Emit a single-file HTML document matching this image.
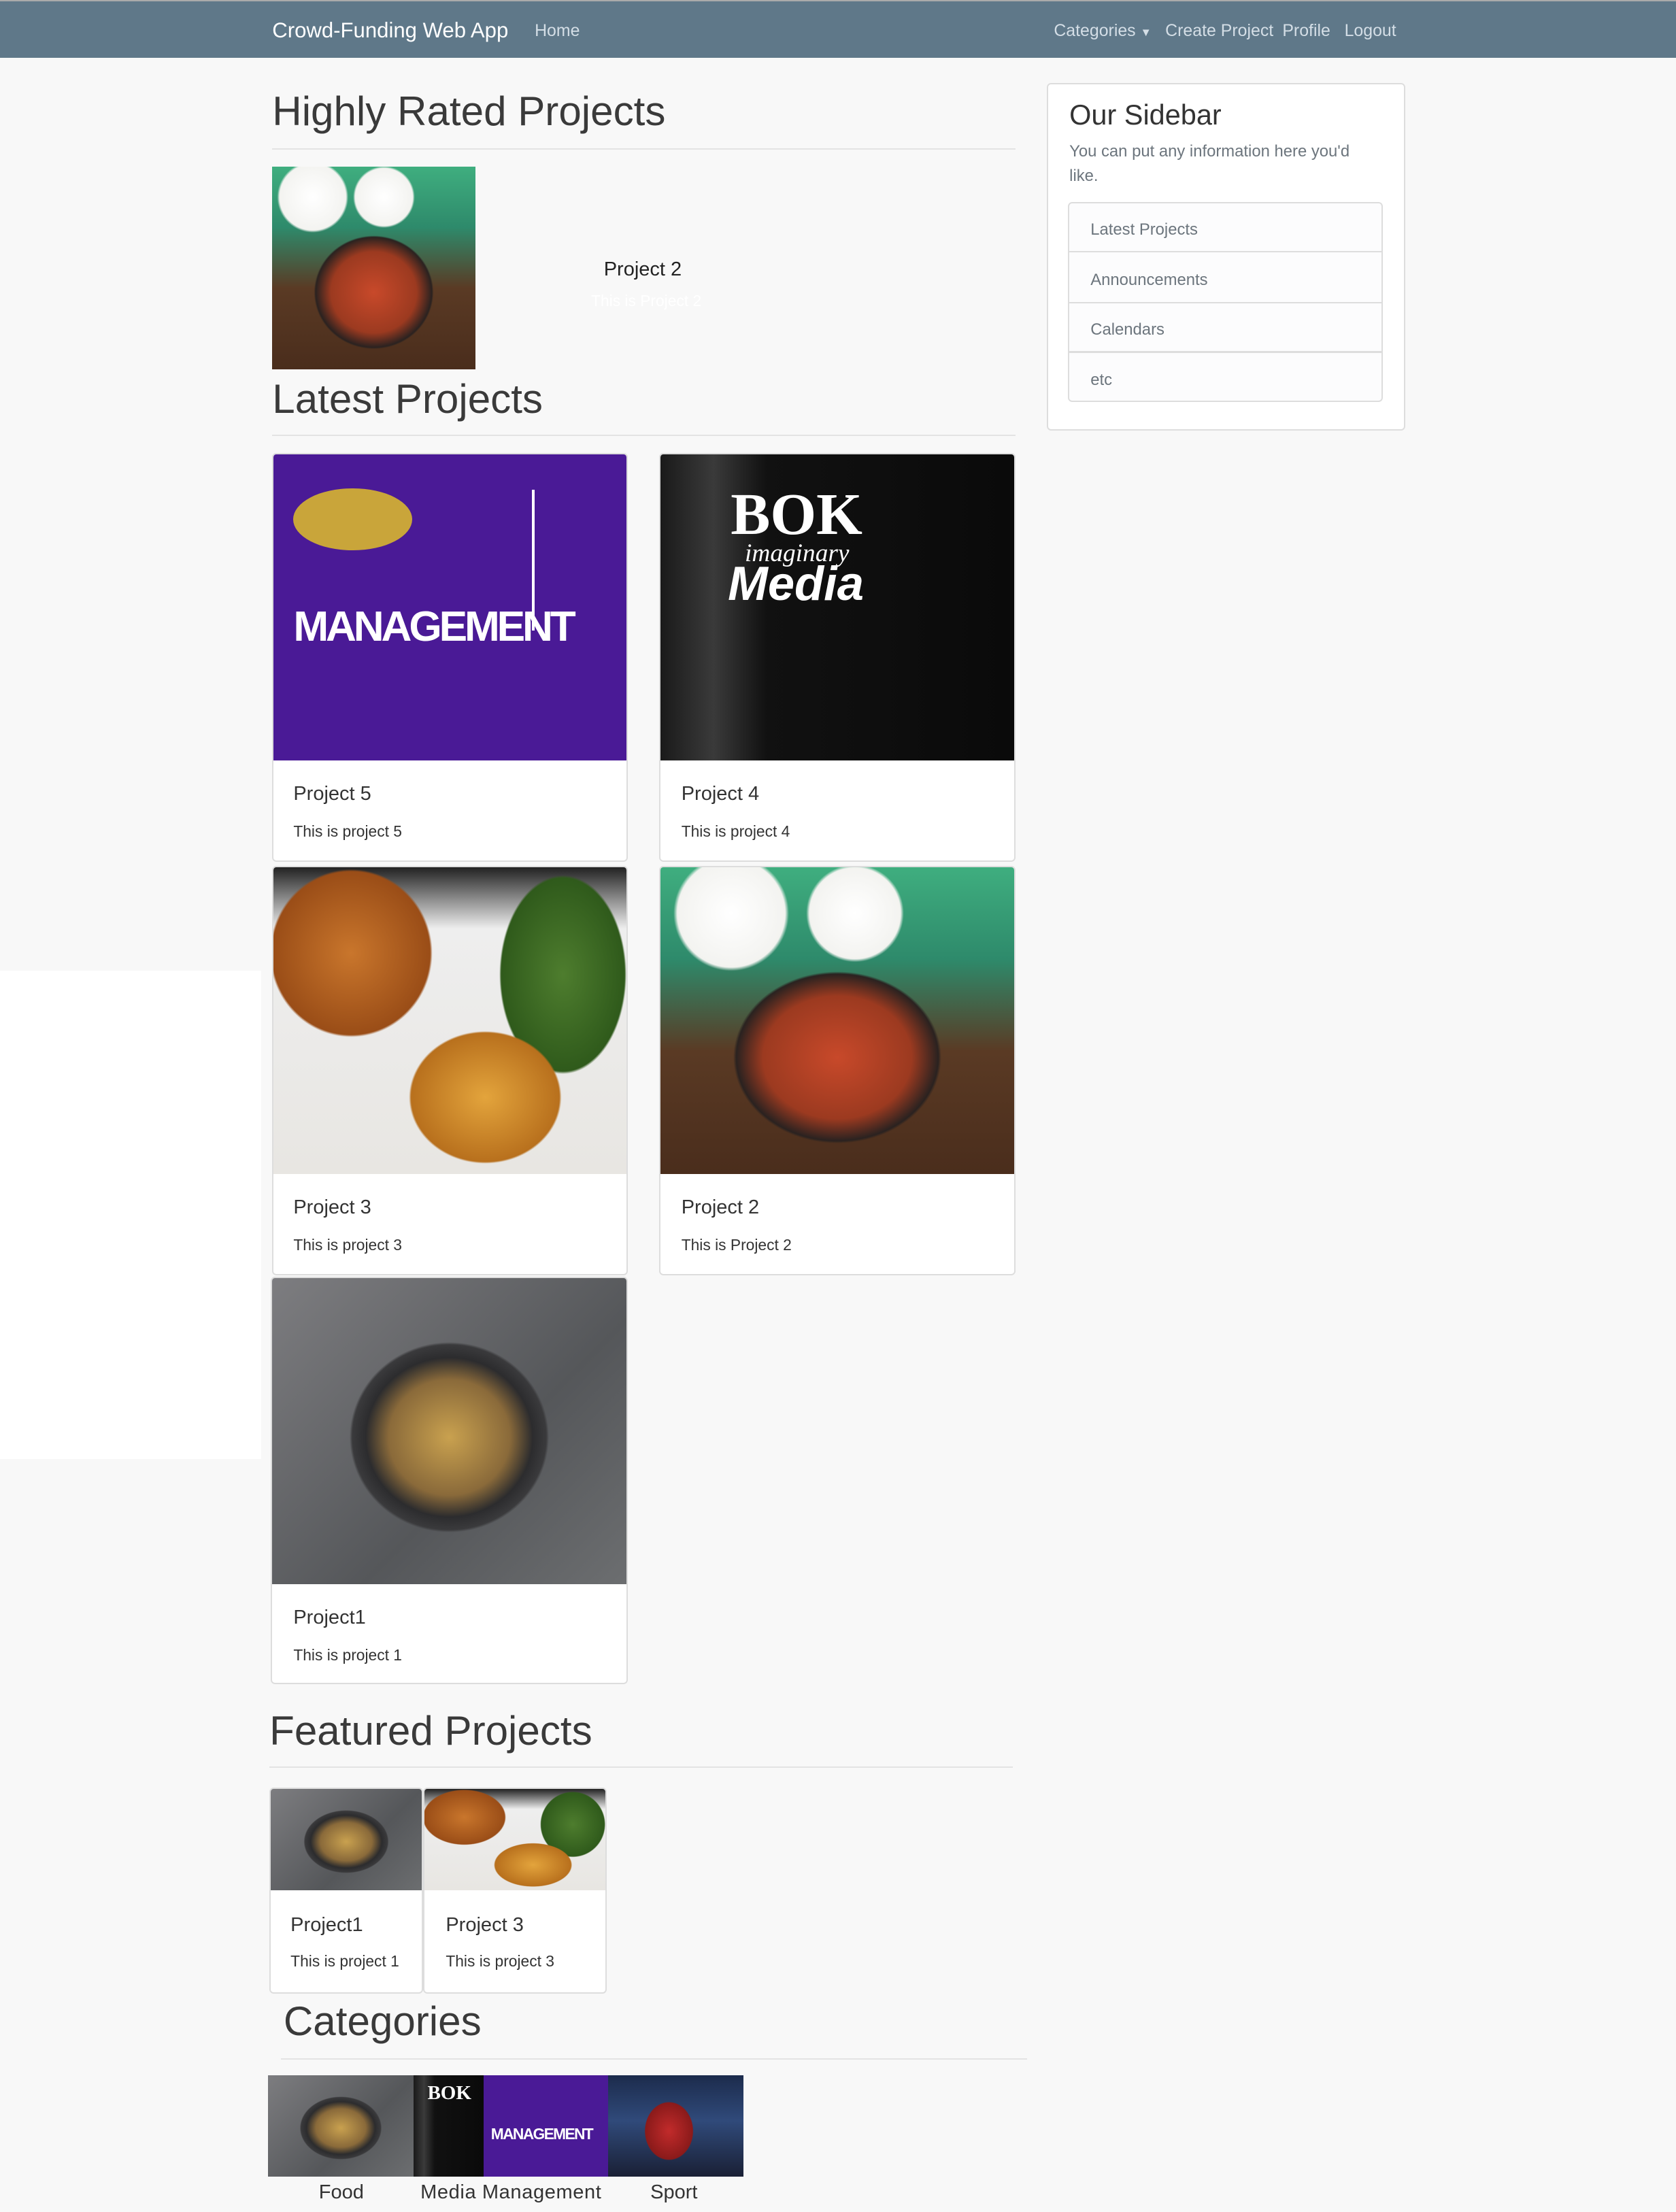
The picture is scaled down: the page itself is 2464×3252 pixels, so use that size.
<!DOCTYPE html>
<html><head><meta charset="utf-8">
<style>
html,body{margin:0;padding:0}
body{width:1188px;height:1568px;zoom:2.07407;background:#f8f8f8;font-family:"Liberation Sans",sans-serif;color:#333;position:relative;overflow:hidden}
.a{position:absolute}
.nav{left:0;top:0;width:1188px;height:41px;background:#5f7889;border-top:1px solid #aaa;box-sizing:border-box}
.nl{color:#d4dee6;font-size:12px;top:15px}
h1{margin:0;font-weight:normal;font-size:29px;color:#3a3a3a;letter-spacing:0px}
.hr{height:1px;background:#e3e3e3}
.card{background:#fff;border:1px solid #ddd;border-radius:3px;box-sizing:border-box;overflow:hidden}
.card .im{position:absolute;left:0;top:0;width:100%}
.ct{position:absolute;font-size:14px;color:#333}
.cx{position:absolute;font-size:11px;color:#333}
.pasta{background:radial-gradient(ellipse 38% 42% at 50% 52%,#c9a14f 0,#8a6a3a 45%,#2c2c2e 62%,#3a3a3c 72%,transparent 74%),linear-gradient(135deg,#7d7d80,#55575a 60%,#6c6e70)}
.burger{background:radial-gradient(ellipse 32% 38% at 22% 28%,#c9762c,#9a4d17 70%,transparent 72%),radial-gradient(ellipse 30% 30% at 60% 75%,#e3a43c,#b8701d 70%,transparent 72%),radial-gradient(ellipse 25% 45% at 82% 35%,#4e7d2e,#2f5a1b 70%,transparent 72%),linear-gradient(#222,#eee 20%,#e8e6e2)}
.tteok{background:radial-gradient(ellipse 42% 40% at 50% 62%,#c8492a,#9c3a20 50%,#2a2220 68%,transparent 70%),radial-gradient(circle at 20% 15%,#fff 0,#f3f3f0 14%,transparent 15%),radial-gradient(circle at 55% 15%,#fff 0,#f3f3f0 14%,transparent 15%),linear-gradient(#3fae7f,#2e8a6b 30%,#5a3a24 60%,#4a2d1c)}
.mgmt{background:#4a1a96}
.media{background:linear-gradient(90deg,#1a1a1a,#3a3a3a 15%,#111 30%,#0a0a0a)}
.sport{background:radial-gradient(ellipse 25% 40% at 45% 55%,#c22b2b,#8a1a1a 70%,transparent 72%),linear-gradient(#1c2b4c,#304a7a 45%,#1a2035)}
</style></head><body>
<div class="a nav"></div>
<div class="a" style="left:193px;top:13px;font-size:15px;color:#fff">Crowd-Funding Web App</div>
<div class="a nl" style="left:379px">Home</div>
<div class="a nl" style="left:747px">Categories <span style="font-size:8px">▼</span></div>
<div class="a nl" style="left:826px">Create Project</div>
<div class="a nl" style="left:909px">Profile</div>
<div class="a nl" style="left:953px">Logout</div>

<div class="a" style="left:0;top:688px;width:185px;height:346px;background:#fff"></div>

<h1 class="a" style="left:193px;top:62px">Highly Rated Projects</h1>
<div class="a hr" style="left:193px;top:105px;width:527px"></div>
<div class="a tteok" style="left:193px;top:118px;width:144px;height:144px"></div>
<div class="a" style="left:428px;top:183px;font-size:14px;color:#222">Project 2</div>
<div class="a" style="left:419px;top:207px;font-size:11px;color:#fff">This is Project 2</div>

<h1 class="a" style="left:193px;top:266px">Latest Projects</h1>
<div class="a hr" style="left:193px;top:308px;width:527px"></div>

<div class="a card" style="left:193px;top:321px;width:252px;height:290px"><div class="im mgmt" style="height:217px"></div>
<div class="a" style="left:14px;top:105px;color:#fff;font-size:30px;font-weight:bold;letter-spacing:-2px">MANAGEMENT</div>
<div class="a" style="left:14px;top:24px;width:84px;height:44px;border-radius:50%;background:#c9a53a"></div>
<div class="a" style="left:183px;top:25px;width:2px;height:100px;background:#fff"></div>
<div class="ct" style="left:14px;top:233px">Project 5</div><div class="cx" style="left:14px;top:261px">This is project 5</div></div>

<div class="a card" style="left:467px;top:321px;width:253px;height:290px"><div class="im media" style="height:217px"></div>
<div class="a" style="left:50px;top:18px;color:#fff;font-size:42px;font-family:'Liberation Serif',serif;font-weight:bold">BOK</div>
<div class="a" style="left:60px;top:60px;color:#fff;font-size:18px;font-family:'Liberation Serif',serif;font-style:italic">imaginary</div>
<div class="a" style="left:48px;top:72px;color:#fff;font-size:34px;font-style:italic;font-weight:bold">Media</div>
<div class="ct" style="left:15px;top:233px">Project 4</div><div class="cx" style="left:15px;top:261px">This is project 4</div></div>

<div class="a card" style="left:193px;top:614px;width:252px;height:290px"><div class="im burger" style="height:217px"></div>
<div class="ct" style="left:14px;top:233px">Project 3</div><div class="cx" style="left:14px;top:261px">This is project 3</div></div>

<div class="a card" style="left:467px;top:614px;width:253px;height:290px"><div class="im tteok" style="height:217px"></div>
<div class="ct" style="left:15px;top:233px">Project 2</div><div class="cx" style="left:15px;top:261px">This is Project 2</div></div>

<div class="a card" style="left:192px;top:905px;width:253px;height:289px"><div class="im pasta" style="height:217px"></div>
<div class="ct" style="left:15px;top:233px">Project1</div><div class="cx" style="left:15px;top:261px">This is project 1</div></div>

<h1 class="a" style="left:191px;top:1210px">Featured Projects</h1>
<div class="a hr" style="left:191px;top:1252px;width:527px"></div>
<div class="a card" style="left:191px;top:1267px;width:109px;height:146px"><div class="im pasta" style="height:72px"></div>
<div class="ct" style="left:14px;top:89px">Project1</div><div class="cx" style="left:14px;top:116px">This is project 1</div></div>
<div class="a card" style="left:300px;top:1267px;width:130px;height:146px"><div class="im burger" style="height:72px"></div>
<div class="ct" style="left:15px;top:89px">Project 3</div><div class="cx" style="left:15px;top:116px">This is project 3</div></div>

<h1 class="a" style="left:201px;top:1416px">Categories</h1>
<div class="a hr" style="left:199px;top:1459px;width:529px"></div>
<div class="a pasta" style="left:190px;top:1471px;width:103px;height:72px"></div>
<div class="a media" style="left:293px;top:1471px;width:50px;height:72px"></div>
<div class="a" style="left:303px;top:1476px;color:#fff;font-size:14px;font-family:'Liberation Serif',serif;font-weight:bold">BOK</div>
<div class="a mgmt" style="left:343px;top:1471px;width:88px;height:72px"></div>
<div class="a" style="left:348px;top:1506px;color:#fff;font-size:11px;font-weight:bold;letter-spacing:-0.8px">MANAGEMENT</div>
<div class="a sport" style="left:431px;top:1471px;width:96px;height:72px"></div>
<div class="a" style="left:226px;top:1546px;font-size:14px;color:#333">Food</div>
<div class="a" style="left:298px;top:1546px;font-size:14px;color:#333;letter-spacing:0.3px">Media Management</div>
<div class="a" style="left:461px;top:1546px;font-size:14px;color:#333">Sport</div>

<div class="a card" style="left:742px;top:59px;width:254px;height:246px"></div>
<div class="a" style="left:758px;top:70px;font-size:20px;color:#333">Our Sidebar</div>
<div class="a" style="left:758px;top:99px;width:215px;font-size:11.5px;line-height:17px;color:#6c757d">You can put any information here you'd like.</div>
<div class="a" style="left:757px;top:143px;width:223px;height:142px;border:1px solid #ddd;border-radius:3px;box-sizing:border-box;background:#fcfcfd"></div>
<div class="a hr" style="left:758px;top:178px;width:221px;background:#ddd"></div>
<div class="a hr" style="left:758px;top:214px;width:221px;background:#ddd"></div>
<div class="a hr" style="left:758px;top:249px;width:221px;background:#ddd"></div>
<div class="a" style="left:773px;top:156px;font-size:11.5px;color:#6c757d">Latest Projects</div>
<div class="a" style="left:773px;top:192px;font-size:11.5px;color:#6c757d">Announcements</div>
<div class="a" style="left:773px;top:227px;font-size:11.5px;color:#6c757d">Calendars</div>
<div class="a" style="left:773px;top:263px;font-size:11.5px;color:#6c757d">etc</div>
</body></html>
